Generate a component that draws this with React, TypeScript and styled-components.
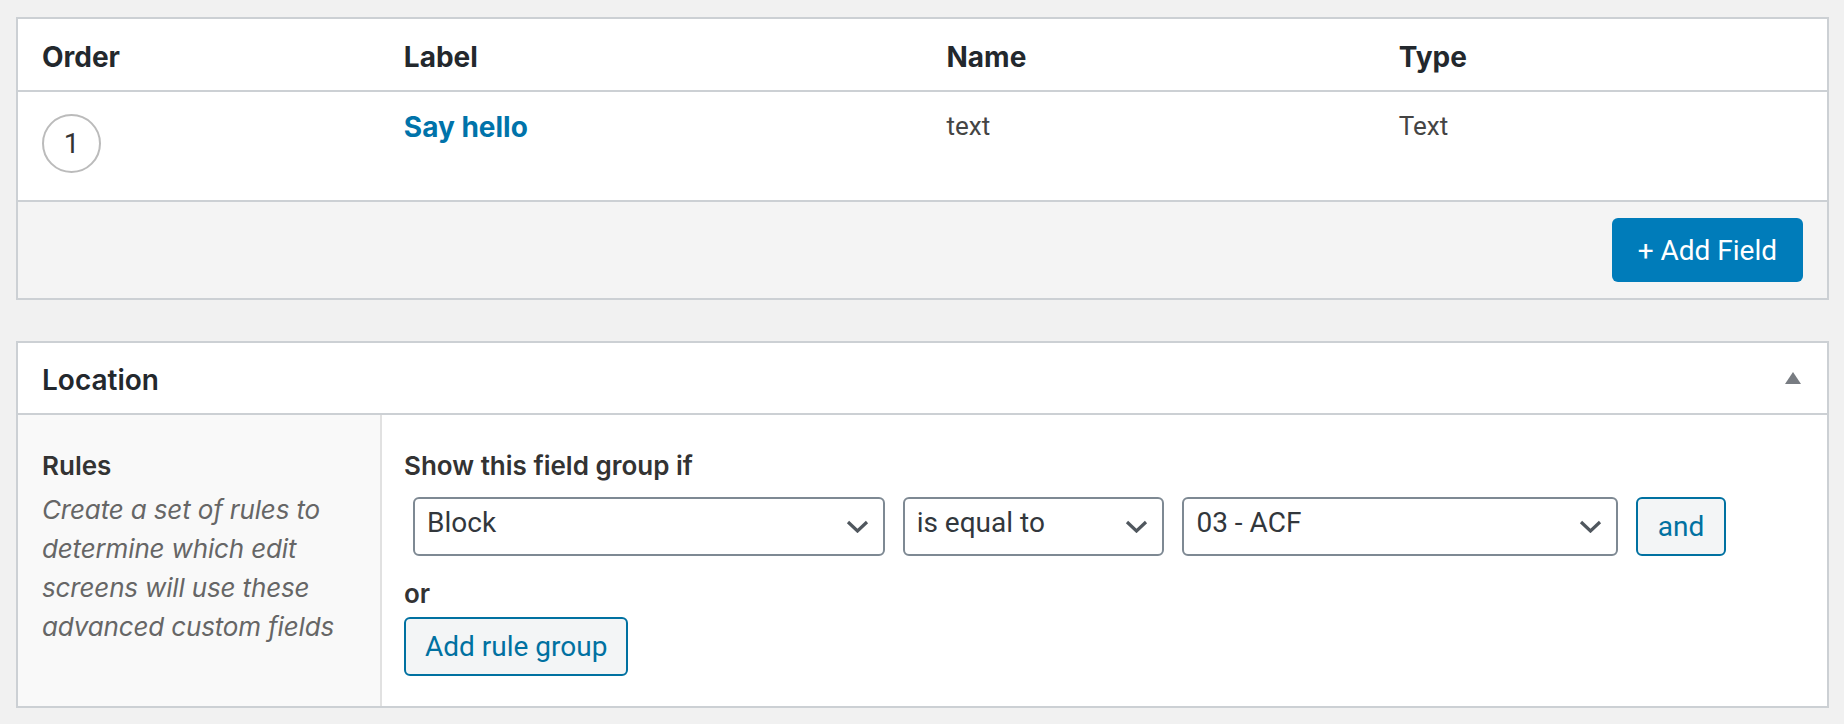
import React from 'react';
import styled, { createGlobalStyle } from 'styled-components';

const GlobalStyle = createGlobalStyle`
  html, body {
    margin: 0;
    padding: 0;
    background: #f1f1f1;
  }
  body {
    font-family: Roboto, "Liberation Sans", Arial, sans-serif;
    color: #3c434a;
  }
  * {
    box-sizing: border-box;
  }
`;

const strongFont = `Inter, Roboto, "Liberation Sans", Arial, sans-serif`;

const Page = styled.div`
  padding: 17px 15px 17px 16px;
  display: flex;
  flex-direction: column;
  gap: 41px;
`;

const Box = styled.section`
  background: #fff;
  border: 2px solid #ccd0d4;
`;

/* ---------- fields table ---------- */

const TableRow = styled.div<{ $head?: boolean }>`
  display: grid;
  grid-template-columns: 20% 30% 25% 25%;
  height: ${p => (p.$head ? 73 : 110)}px;
  border-bottom: 2px solid #ccd0d4;
`;

const HeadCell = styled.div`
  padding: 18px 0 0 24px;
  font-family: ${strongFont};
  font-size: 28px;
  line-height: 40px;
  font-weight: 700;
  color: #23282d;
`;

const Cell = styled.div<{ $top?: number }>`
  padding: ${p => p.$top ?? 14}px 0 0 24px;
  font-size: 26px;
  line-height: 40px;
  color: #444;
`;

const OrderCircle = styled.span`
  display: flex;
  align-items: center;
  justify-content: center;
  width: 59px;
  height: 59px;
  border: 2px solid #bbb;
  border-radius: 50%;
  font-size: 28px;
  color: #333;
`;

const FieldLink = styled.a`
  font-family: ${strongFont};
  font-size: 28px;
  color: #0073aa;
  font-weight: 700;
  text-decoration: none;
  cursor: pointer;
`;

const Footer = styled.div`
  display: flex;
  justify-content: flex-end;
  align-items: center;
  height: 96px;
  padding: 0 24px;
  background: #f4f4f4;
`;

const PrimaryButton = styled.button`
  height: 64px;
  padding: 0 26px;
  border: none;
  border-radius: 6px;
  background: #007cba;
  color: #fff;
  font-family: inherit;
  font-size: 28px;
  cursor: pointer;
`;

/* ---------- location box ---------- */

const BoxHeader = styled.div`
  display: flex;
  align-items: center;
  justify-content: space-between;
  height: 72px;
  padding: 0 26px 0 24px;
  border-bottom: 2px solid #ccd0d4;
`;

const BoxTitle = styled.h2`
  margin: 0;
  padding-top: 4px;
  font-family: ${strongFont};
  font-size: 28px;
  line-height: 40px;
  font-weight: 600;
  color: #23282d;
`;

const BoxBody = styled.div`
  display: grid;
  grid-template-columns: 364px 1fr;
`;

const LabelCol = styled.div`
  background: #f9f9f9;
  border-right: 2px solid #e1e1e1;
  padding: 31px 24px 30px 24px;
`;

const InputCol = styled.div`
  padding: 31px 24px 30px 22px;
`;

const FieldLabel = styled.div<{ $gap?: number }>`
  font-family: ${strongFont};
  font-size: 26px;
  line-height: 39px;
  font-weight: 600;
  color: #333;
  margin-bottom: ${p => p.$gap ?? 0}px;
`;

const Description = styled.p`
  margin: 5px 0 0;
  font-family: ${strongFont};
  font-size: 26px;
  line-height: 39px;
  font-style: italic;
  letter-spacing: -0.15px;
  color: #666;
`;

const RuleRow = styled.div`
  display: grid;
  grid-template-columns: 35% 20% 32.4% auto;
  align-items: center;
`;

const RuleCell = styled.div`
  padding: 0 9px;
`;

const SelectBox = styled.div`
  display: flex;
  align-items: center;
  justify-content: space-between;
  height: 59px;
  padding: 0 14px 0 12px;
  border: 2px solid #7e8993;
  border-radius: 6px;
  background: #fff;
  font-size: 28px;
  color: #32373c;
  cursor: pointer;
`;

const SelectValue = styled.span`
  padding-bottom: 8px;
`;

const SecondaryButton = styled.button<{ $pad: number }>`
  height: 59px;
  padding: 0 ${p => p.$pad}px;
  border: 2px solid #0071a1;
  border-radius: 6px;
  background: #f3f5f6;
  color: #0071a1;
  font-family: inherit;
  font-size: 28px;
  cursor: pointer;
`;

const OrLabel = styled(FieldLabel)`
  margin-top: 18px;
  margin-bottom: 4px;
`;

const Chevron = () => (
  <svg width="23" height="13" viewBox="0 0 23 13" fill="none">
    <path d="M2 2 L11.5 11 L21 2" stroke="#50575e" strokeWidth="3.2" />
  </svg>
);

const Triangle = () => (
  <svg width="16" height="12" viewBox="0 0 16 12">
    <polygon points="8,0 16,12 0,12" fill="#787c82" />
  </svg>
);

const Select: React.FC<{ value: string }> = ({ value }) => (
  <SelectBox>
    <SelectValue>{value}</SelectValue>
    <Chevron />
  </SelectBox>
);

const App: React.FC = () => {
  return (
    <>
      <GlobalStyle />
      <Page>
        <Box>
          <TableRow $head>
            <HeadCell>Order</HeadCell>
            <HeadCell>Label</HeadCell>
            <HeadCell>Name</HeadCell>
            <HeadCell>Type</HeadCell>
          </TableRow>
          <TableRow>
            <Cell $top={22}>
              <OrderCircle>1</OrderCircle>
            </Cell>
            <Cell $top={15}>
              <FieldLink>Say hello</FieldLink>
            </Cell>
            <Cell>text</Cell>
            <Cell>Text</Cell>
          </TableRow>
          <Footer>
            <PrimaryButton>+ Add Field</PrimaryButton>
          </Footer>
        </Box>

        <Box>
          <BoxHeader>
            <BoxTitle>Location</BoxTitle>
            <Triangle />
          </BoxHeader>
          <BoxBody>
            <LabelCol>
              <FieldLabel>Rules</FieldLabel>
              <Description>
                Create a set of rules to determine which edit screens will use these advanced custom fields
              </Description>
            </LabelCol>
            <InputCol>
              <FieldLabel $gap={12}>Show this field group if</FieldLabel>
              <RuleRow>
                <RuleCell>
                  <Select value="Block" />
                </RuleCell>
                <RuleCell>
                  <Select value="is equal to" />
                </RuleCell>
                <RuleCell>
                  <Select value="03 - ACF" />
                </RuleCell>
                <RuleCell>
                  <SecondaryButton $pad={20}>and</SecondaryButton>
                </RuleCell>
              </RuleRow>
              <OrLabel>or</OrLabel>
              <SecondaryButton $pad={19}>Add rule group</SecondaryButton>
            </InputCol>
          </BoxBody>
        </Box>
      </Page>
    </>
  );
};

export default App;
